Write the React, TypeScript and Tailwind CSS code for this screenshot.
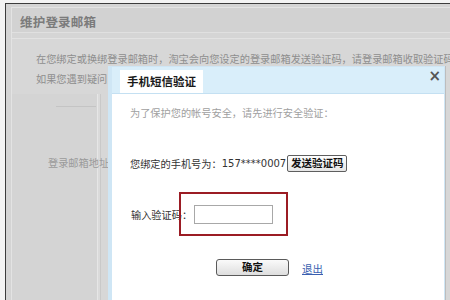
import React from "react";

const cjk = { fontFamily: '"Noto Sans CJK SC", "Noto Sans", sans-serif' };

export default function App() {
  return (
    <div
      className="relative w-[450px] h-[300px] overflow-hidden bg-[#f3f3f3] pt-[3px] pl-[5px]"
      style={cjk}
    >
      {/* background page */}
      <div className="h-[297px] border-t border-l border-[#3c3c3c] bg-[#d4d4d4] pt-[3px] pl-[5px]">
        <div className="h-[293px] border-t border-l border-[#e3e3e3] bg-[#d7d7d7] flex flex-col overflow-hidden">
          <div className="shrink-0 h-[25px] flex items-center pl-[8px] pt-[5px] bg-[#d2d2d2] border-b border-[#e0e0e0]">
            <span className="text-[12.5px] font-bold text-[#7b7b7b] tracking-[0.2px] leading-none">
              维护登录邮箱
            </span>
          </div>
          <div className="shrink-0 h-[6px] bg-[#d5d5d5] border-b border-[#e2e2e2]" />
          <div className="relative flex-1 min-h-0">
            <div className="pl-[24px] pt-[10px] text-[10.2px] text-[#8e8e8e] leading-[20px] whitespace-nowrap">
              <div>在您绑定或换绑登录邮箱时，淘宝会向您设定的登录邮箱发送验证码，请登录邮箱收取验证码</div>
              <div>如果您遇到疑问</div>
            </div>
            <div className="flex mt-[5px] h-[220px]">
              <div className="w-[86px] border-r border-[#e6e6e6] bg-[#d4d4d4] flex flex-col">
                <div className="mt-[12px] ml-[44px] w-[40px] h-[1px] bg-[#c4c4c4]" />
              </div>
              <div className="w-[3px] border-r border-[#c9c9c9] bg-[#dadada]" />
            </div>
            <div className="absolute left-[36px] top-[117px] text-[10.2px] text-[#9a9a9a] leading-[14px] whitespace-nowrap">
              登录邮箱地址
            </div>
          </div>
        </div>
      </div>

      {/* dialog overlay */}
      <div className="absolute left-[108px] top-[66px] w-[337px] h-[240px] border border-l-[4px] border-[#cfe6f5] bg-white flex flex-col shadow-[1px_0_0_#bdbdbd]">
        <div className="relative shrink-0 h-[27px] bg-[#d9eefa] border-b border-[#c4e0f2] flex items-end pl-[8px]">
          <div className="w-[83px] h-[23px] bg-white flex items-center justify-center">
            <span className="text-[11.5px] font-bold text-[#1a1a1a] leading-none">手机短信验证</span>
          </div>
          <span
            className="absolute right-[3px] top-[2px] text-[15px] font-bold leading-none text-[#555]"
            style={{ fontFamily: '"DejaVu Sans", sans-serif' }}
          >
            ×
          </span>
        </div>
        <div className="flex flex-col pl-[18px] pt-[12px] text-[10.2px] leading-[14px]">
          <div className="h-[14px] text-[#a0a0a0] whitespace-nowrap">
            为了保护您的帐号安全，请先进行安全验证：
          </div>
          <div className="mt-[35px] h-[17px] flex items-center whitespace-nowrap">
            <span className="text-[#333]">您绑定的手机号为：</span>
            <span
              className="text-[#333] text-[10px]"
              style={{ fontFamily: '"DejaVu Sans", sans-serif' }}
            >
              157****0007
            </span>
            <button className="ml-[1px] w-[60px] h-[17px] rounded-[2px] border border-[#5e5e5e] bg-gradient-to-b from-white to-[#e6e6e6] text-[10.5px] font-semibold text-[#111] leading-none flex items-center justify-center">
              发送验证码
            </button>
          </div>
          <div className="mt-[33px] h-[19px] flex items-center whitespace-nowrap">
            <span className="text-[#333] pl-[1px]">输入验证码：</span>
            <div className="ml-[2px] w-[79px] h-[19px] border border-[#a8a8a8] bg-white" />
          </div>
          <div className="mt-[35px] h-[17px] flex items-center">
            <button className="ml-[86px] w-[73px] h-[17px] rounded-[3px] border border-[#5a5a5a] bg-gradient-to-b from-[#fafafa] to-[#dedede] text-[10.5px] font-bold text-[#111] leading-none flex items-center justify-center">
              确定
            </button>
            <a className="ml-[13px] text-[10.5px] text-[#3a5fb0] underline leading-none mt-[3px]">退出</a>
          </div>
        </div>
      </div>

      {/* red highlight annotation */}
      <div className="absolute left-[179px] top-[192px] w-[109px] h-[44px] border-2 border-[#9b1c24]" />
    </div>
  );
}
